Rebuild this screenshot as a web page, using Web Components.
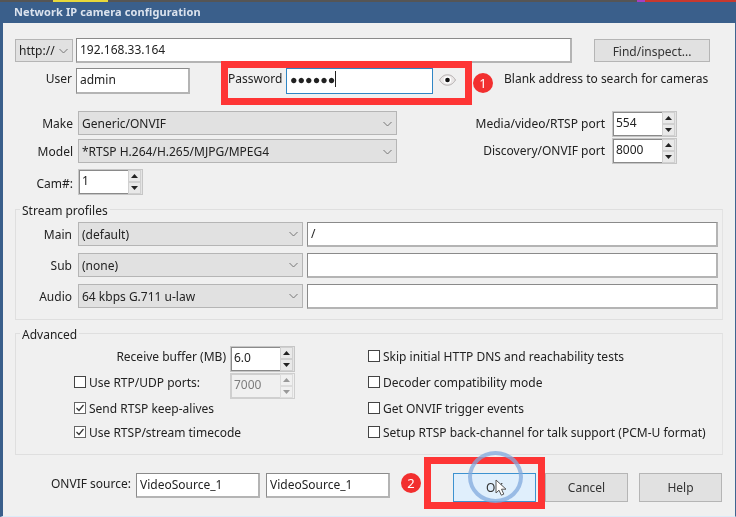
<!DOCTYPE html>
<html><head><meta charset="utf-8">
<style>
html,body{margin:0;padding:0;background:#f0f0f0}
body{width:736px;height:517px;overflow:hidden}
.row{display:flex;align-items:flex-start}
</style></head><body>
<template id="t-window"><style>
:host{display:block;position:relative;width:736px;height:517px;box-sizing:border-box;overflow:hidden;background:#f0f0f0;font:12px "Noto Sans","Open Sans",sans-serif;color:#222;filter:blur(.3px)}
.strip{display:flex;height:2px;background:#555}
.strip i{display:block}
.bar{height:21px;background:#3a5f8b;color:#dbe3ee;font:bold 11px "Noto Sans",sans-serif;line-height:19px;padding-left:14px;letter-spacing:.1px;box-sizing:border-box}
.frame{border-left:3px solid #3a5f8b;border-right:1px solid #3f6590;border-bottom:1px solid #dcebf8;height:494px;box-sizing:border-box;padding:15px 0 0 12px}
</style><div class="strip"><i style="width:53px"></i><i style="width:55px;background:#e8d83a"></i><i style="width:529px"></i><i style="width:8px;background:#a83fc0"></i><i style="width:91px;background:#c8392f"></i></div>
<div class="bar"><slot name="title"></slot></div><div class="frame"><slot></slot></div></template>

<template id="t-text"><style>
:host{display:block;box-sizing:border-box;height:var(--h,25px);width:var(--w,100px);background:#fff;border:1px solid #b4b4b4;border-top-color:#8a8a8a;border-left-color:#8a8a8a;border-right-width:2px;border-bottom-width:2px;padding-left:3px;line-height:22px;white-space:nowrap;overflow:hidden;flex:none}
:host([focused]){border:1px solid #2f86c5}
:host([focused]) .c{display:inline-block;width:1px;height:16px;background:#222;vertical-align:-3px;margin-left:0}
.c{display:none}
</style><slot></slot><span class="c"></span></template>

<template id="t-select"><style>
:host{display:flex;align-items:center;box-sizing:border-box;height:var(--h,24px);width:var(--w,100px);background:#e1e1e1;border:1px solid #b5b5b5;padding:var(--pt,1px) 2px 0 3px;flex:none;white-space:nowrap}
.t{flex:1}
svg{flex:none;margin-right:2px}
</style><span class="t"><slot></slot></span><svg width="9" height="6" viewBox="0 0 9 6" fill="none" stroke="#777" stroke-width="1"><path d="M.5 1 4.500 5 8.500 1"/></svg></template>

<template id="t-spin"><style>
:host{display:flex;box-sizing:border-box;height:26px;width:var(--w,65px);flex:none;background:#e4e4e4;border:1px solid #c6c6c6;padding:0 1px 0 0}
.v{flex:1;box-sizing:border-box;background:#fff;border:1px solid #8a8a8a;border-width:1px 0 1px 1px;padding-left:2px;line-height:20px}
.b{display:flex;flex-direction:column;width:13px;flex:none}
.b span{flex:1;display:flex;align-items:center;justify-content:center;background:#e9e9e9;border:1px solid #d0d0d0;box-sizing:border-box}
svg{display:block;fill:#222}
:host([disabled]){background:#f0f0f0;border-color:#cfcfcf}
:host([disabled]) .v{background:#f0f0f0;border-color:#cfcfcf;color:#7d7d7d}
:host([disabled]) .b span{background:#f0f0f0;border-color:#dcdcdc}
:host([disabled]) svg{fill:#999}
</style><div class="v"><slot></slot></div><div class="b"><span><svg width="7" height="4"><path d="M3.500 0 7 4H0z"/></svg></span><span><svg width="7" height="4"><path d="M0 0h7L3.500 4z"/></svg></span></div></template>

<template id="t-check"><style>
:host{display:flex;align-items:center;height:16px;white-space:nowrap;flex:none}
.b{display:block;box-sizing:border-box;width:12px;height:12px;background:#fff;border:1px solid #444;margin-right:3px;flex:none}
:host([checked]) .b{border-color:#666}
svg{display:none}
:host([checked]) svg{display:block}
</style><span class="b"><svg width="10" height="10" viewBox="0 0 10 10" fill="none" stroke="#333" stroke-width="1.2"><path d="M1.500 5 4 7.500 8.500 2"/></svg></span><slot></slot></template>

<template id="t-button"><style>
:host{display:flex;align-items:center;justify-content:center;box-sizing:border-box;width:var(--w,83px);height:var(--h,29px);background:#e1e1e1;border:1px solid #b5b5b5;flex:none;color:#333;padding-top:var(--pt,0)}
:host([primary]){background:#e0effc;border-color:#3d92d0}
</style><slot></slot></template>

<template id="t-group"><style>
:host{display:block;box-sizing:border-box;width:708px;border:1px solid #dfdfdf;border-right-color:#e3e3e3}
.l{width:fit-content;margin:-8px 0 0 4px;padding:0 2px;background:#f0f0f0;height:17px;line-height:17px}
</style><div class="l"><slot name="legend"></slot></div><slot></slot></template>

<template id="t-label"><style>
:host{display:block;flex:none;width:var(--w,58px);text-align:right;white-space:nowrap;line-height:var(--lh,22px)}
</style><slot></slot></template>

<template id="t-box"><style>
:host{display:block;position:absolute;box-sizing:border-box;border:7px solid #fe3535;pointer-events:none}
</style></template>

<template id="t-badge"><style>
:host{display:flex;position:absolute;align-items:center;justify-content:center;width:20px;height:20px;border-radius:50%;background:#f22f2f;color:#fff;font-size:13px;line-height:20px}
</style><slot></slot></template>

<template id="t-eye"><style>
:host{display:block;flex:none;width:17px;height:12px}
svg{display:block}
</style><svg width="17" height="12" viewBox="0 0 17 12"><path d="M.5 6C3 2 5.500.8 8.500.8S14 2 16.500 6C14 10 11.500 11.200 8.500 11.200S3 10 .5 6z" fill="#e9e6e6" stroke="#b3aeae"/><circle cx="8.500" cy="6" r="3.800" fill="#fff"/><circle cx="8.500" cy="6" r="2.300" fill="#111"/></svg></template>

<template id="t-pointer"><style>
:host{display:block;position:absolute;width:55px;height:52px;box-sizing:border-box;border-radius:50%;border:4px solid rgba(130,170,222,.75)}
svg{position:absolute;left:23px;top:24px}
</style><svg width="14" height="18" viewBox="0 0 14 18"><path d="M1 1v13l3-2.800 2.300 5 2.500-1.100-2.300-4.900H11z" fill="#fff" stroke="#555" stroke-width="1"/></svg></template>

<ip-window>
<span slot="title">Network IP camera configuration</span>

<div class="row" style="height:25px">
  <ip-select style="--w:58px;--h:23px;--pt:0;margin:1px 3px 0 0">http://</ip-select>
  <ip-text style="--w:496px">192.168.33.164</ip-text>
  <ip-button style="--w:116px;--h:23px;--pt:1px;margin:1px 0 0 22px">Find/inspect...</ip-button>
</div>

<div class="row" style="height:26px;margin-top:5px">
  <ip-label style="--w:57px;margin-right:4px">User</ip-label>
  <ip-text style="--w:114px;--h:26px">admin</ip-text>
  <ip-label style="--w:51px;margin-left:38px;margin-right:7px">Password</ip-label>
  <ip-text focused style="--w:147px;--h:26px;font-size:12.5px">●●●●●●</ip-text>
  <ip-eye style="margin:6px 0 0 6px"></ip-eye>
  <ip-label style="--w:auto;margin-left:48px">Blank address to search for cameras</ip-label>
</div>

<div class="row" style="margin-top:17px;height:81px">
  <div style="width:450px">
    <div class="row"><ip-label style="margin-right:5px;--lh:25px">Make</ip-label><ip-select style="--w:319px">Generic/ONVIF</ip-select></div>
    <div class="row" style="margin-top:3px"><ip-label style="margin-right:5px;--lh:26px">Model</ip-label><ip-select style="--w:319px">*RTSP H.264/H.265/MJPG/MPEG4</ip-select></div>
    <div class="row" style="margin-top:4px"><ip-label style="margin-right:5px;--lh:30px">Cam#:</ip-label><ip-spin style="--w:65px">1</ip-spin></div>
  </div>
  <div>
    <div class="row"><ip-label style="--w:140px;margin-right:7px;--lh:25px">Media/video/RTSP port</ip-label><ip-spin>554</ip-spin></div>
    <div class="row" style="margin-top:1px"><ip-label style="--w:140px;margin-right:7px;--lh:26px">Discovery/ONVIF port</ip-label><ip-spin>8000</ip-spin></div>
  </div>
</div>

<ip-group style="margin-top:17px;height:111px">
  <span slot="legend">Stream profiles</span>
  <div style="padding-top:3px">
    <div class="row"><ip-label style="--w:56px;margin-right:6px;--lh:26px">Main</ip-label><ip-select style="--w:225px;--pt:0">(default)</ip-select><ip-text style="--w:411px;margin-left:4px">/</ip-text></div>
    <div class="row" style="margin-top:5px"><ip-label style="--w:56px;margin-right:6px;--lh:26px">Sub</ip-label><ip-select style="--w:225px;--pt:0">(none)</ip-select><ip-text style="--w:411px;margin-left:4px"></ip-text></div>
    <div class="row" style="margin-top:5px"><ip-label style="--w:56px;margin-right:6px;--lh:26px">Audio</ip-label><ip-select style="--w:225px;--pt:0">64 kbps G.711 u-law</ip-select><ip-text style="--w:411px;margin-left:4px"></ip-text></div>
  </div>
</ip-group>

<ip-group style="margin-top:13px;height:122px">
  <span slot="legend">Advanced</span>
  <div class="row" style="padding:3px 0 0 58px">
    <div style="width:294px">
      <div class="row"><ip-label style="--w:152px;margin-right:4px">Receive buffer (MB)</ip-label><ip-spin>6.0</ip-spin></div>
      <div class="row" style="margin-top:1px"><ip-check style="width:156px;margin-top:1px">Use RTP/UDP ports:</ip-check><ip-spin disabled>7000</ip-spin></div>
      <ip-check checked style="margin-top:1px">Send RTSP keep-alives</ip-check>
      <ip-check checked style="margin-top:8px">Use RTSP/stream timecode</ip-check>
    </div>
    <div style="padding-top:2px">
      <ip-check>Skip initial HTTP DNS and reachability tests</ip-check>
      <ip-check style="margin-top:10px">Decoder compatibility mode</ip-check>
      <ip-check style="margin-top:10px">Get ONVIF trigger events</ip-check>
      <ip-check style="margin-top:8px">Setup RTSP back-channel for talk support (PCM-U format)</ip-check>
    </div>
  </div>
</ip-group>

<div class="row" style="margin-top:18px">
  <ip-label style="--w:116px;margin-right:5px">ONVIF source:</ip-label>
  <ip-text style="--w:124px">VideoSource_1</ip-text>
  <ip-text style="--w:124px;margin-left:6px">VideoSource_1</ip-text>
  <ip-button primary style="margin-left:63px">OK</ip-button>
  <ip-button style="margin-left:9px">Cancel</ip-button>
  <ip-button style="margin-left:11px">Help</ip-button>
</div>

<ip-box style="left:221px;top:61px;width:251px;height:44px"></ip-box>
<ip-box style="left:424px;top:457px;width:121px;height:52px"></ip-box>
<ip-badge style="left:473px;top:73px">1</ip-badge>
<ip-badge style="left:401px;top:473px">2</ip-badge>
<ip-pointer style="left:468px;top:451px"></ip-pointer>
</ip-window>

<script>
for (const [tag, id] of [['ip-window','t-window'],['ip-text','t-text'],['ip-select','t-select'],['ip-spin','t-spin'],['ip-check','t-check'],['ip-button','t-button'],['ip-group','t-group'],['ip-label','t-label'],['ip-box','t-box'],['ip-badge','t-badge'],['ip-eye','t-eye'],['ip-pointer','t-pointer']]) {
  customElements.define(tag, class extends HTMLElement {
    constructor(){ super(); this.attachShadow({mode:'open'}).appendChild(document.getElementById(id).content.cloneNode(true)); }
  });
}
</script>
</body></html>
